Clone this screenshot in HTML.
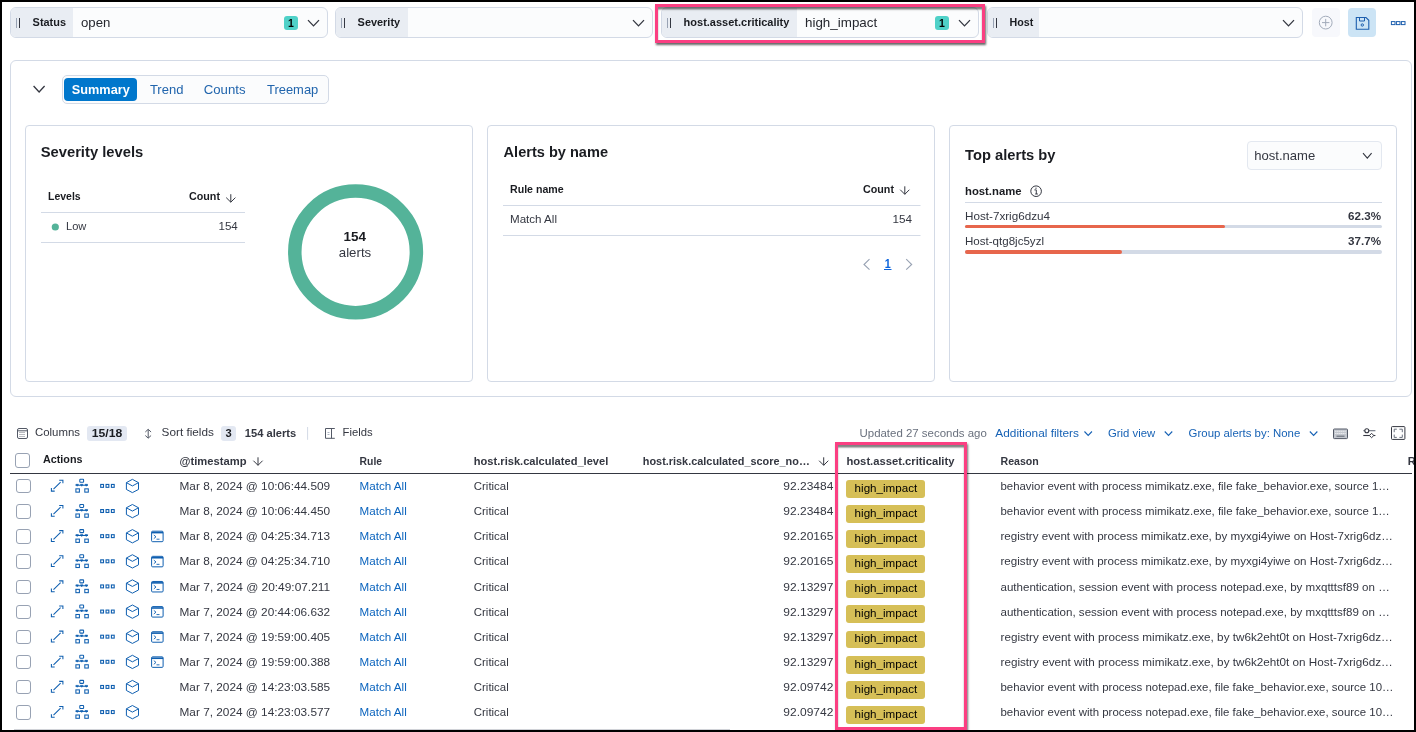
<!DOCTYPE html>
<html><head><meta charset="utf-8"><title>Alerts</title>
<style>
html,body{margin:0;padding:0;background:#fff;}
body{width:1416px;height:732px;position:relative;overflow:hidden;font-family:"Liberation Sans", sans-serif;}
svg{position:absolute;left:0;top:0;will-change:transform;}
svg text{font-family:"Liberation Sans", sans-serif;}
</style></head><body>

<div style="position:absolute;left:10px;top:7px;width:318px;height:31px;box-sizing:border-box;border:1px solid #d3dae6;border-radius:6px;background:#fbfcfd;overflow:hidden"></div>
<div style="position:absolute;left:11px;top:8px;width:62px;height:29px;background:#e9edf3;border-radius:5px 0 0 5px"></div>
<div style="position:absolute;left:284px;top:16px;width:14px;height:14px;background:#4fd1c8;border-radius:3px"></div>
<div style="position:absolute;left:335px;top:7px;width:318px;height:31px;box-sizing:border-box;border:1px solid #d3dae6;border-radius:6px;background:#fbfcfd;overflow:hidden"></div>
<div style="position:absolute;left:336px;top:8px;width:72px;height:29px;background:#e9edf3;border-radius:5px 0 0 5px"></div>
<div style="position:absolute;left:661px;top:7px;width:318px;height:31px;box-sizing:border-box;border:1px solid #d3dae6;border-radius:6px;background:#fbfcfd;overflow:hidden"></div>
<div style="position:absolute;left:662px;top:8px;width:135px;height:29px;background:#e9edf3;border-radius:5px 0 0 5px"></div>
<div style="position:absolute;left:935px;top:16px;width:14px;height:14px;background:#4fd1c8;border-radius:3px"></div>
<div style="position:absolute;left:987px;top:7px;width:316px;height:31px;box-sizing:border-box;border:1px solid #d3dae6;border-radius:6px;background:#fbfcfd;overflow:hidden"></div>
<div style="position:absolute;left:988px;top:8px;width:51px;height:29px;background:#e9edf3;border-radius:5px 0 0 5px"></div>
<div style="position:absolute;left:1312px;top:8px;width:28px;height:29px;background:#f7f8fc;border-radius:4px"></div>
<div style="position:absolute;left:1348px;top:8px;width:28px;height:29px;background:#cce4f5;border-radius:4px"></div>
<div style="position:absolute;left:10px;top:60px;width:1402px;height:337px;box-sizing:border-box;border:1px solid #d3dae6;border-radius:6px;background:#fff"></div>
<div style="position:absolute;left:61.5px;top:75.3px;width:267.5px;height:28.3px;box-sizing:border-box;border:1px solid #d3dae6;border-radius:5px;background:#fbfcfd"></div>
<div style="position:absolute;left:64px;top:78px;width:73px;height:23px;background:#0077cc;border-radius:4px"></div>
<div style="position:absolute;left:25px;top:125px;width:448px;height:257px;box-sizing:border-box;border:1px solid #d3dae6;border-radius:4px;background:#fff"></div>
<div style="position:absolute;left:487px;top:125px;width:448px;height:257px;box-sizing:border-box;border:1px solid #d3dae6;border-radius:4px;background:#fff"></div>
<div style="position:absolute;left:949px;top:125px;width:448px;height:257px;box-sizing:border-box;border:1px solid #d3dae6;border-radius:4px;background:#fff"></div>
<div style="position:absolute;left:1247.3px;top:141.1px;width:134.4px;height:28.7px;box-sizing:border-box;border:1px solid #e3e8f0;border-radius:4px;background:#fbfcfd"></div>
<div style="position:absolute;left:965px;top:225px;width:417px;height:3px;background:#d3dae6;border-radius:2px"></div>
<div style="position:absolute;left:965px;top:225px;width:260px;height:3px;background:#e7664c;border-radius:2px"></div>
<div style="position:absolute;left:965px;top:250.2px;width:417px;height:3.4px;background:#d3dae6;border-radius:2px"></div>
<div style="position:absolute;left:965px;top:250.2px;width:157px;height:3.4px;background:#e7664c;border-radius:2px"></div>
<div style="position:absolute;left:87px;top:426.4px;width:40px;height:14.2px;background:#e3e8f2;border-radius:3px"></div>
<div style="position:absolute;left:221.3px;top:426px;width:14.7px;height:14.7px;background:#e3e8f2;border-radius:3px"></div>
<div style="position:absolute;left:15.2px;top:453.3px;width:14.6px;height:14.4px;box-sizing:border-box;border:1px solid #98a2b3;border-radius:3px;background:#fff"></div>
<div style="position:absolute;left:16px;top:479.0px;width:14.6px;height:14.4px;box-sizing:border-box;border:1px solid #98a2b3;border-radius:3px;background:#fff"></div>
<div style="position:absolute;left:845.8px;top:479.8px;width:79px;height:17.8px;background:#d6bf57;border-radius:3px"></div>
<div style="position:absolute;left:16px;top:504.13px;width:14.6px;height:14.4px;box-sizing:border-box;border:1px solid #98a2b3;border-radius:3px;background:#fff"></div>
<div style="position:absolute;left:845.8px;top:504.93px;width:79px;height:17.8px;background:#d6bf57;border-radius:3px"></div>
<div style="position:absolute;left:16px;top:529.26px;width:14.6px;height:14.4px;box-sizing:border-box;border:1px solid #98a2b3;border-radius:3px;background:#fff"></div>
<div style="position:absolute;left:845.8px;top:530.0600000000001px;width:79px;height:17.8px;background:#d6bf57;border-radius:3px"></div>
<div style="position:absolute;left:16px;top:554.39px;width:14.6px;height:14.4px;box-sizing:border-box;border:1px solid #98a2b3;border-radius:3px;background:#fff"></div>
<div style="position:absolute;left:845.8px;top:555.19px;width:79px;height:17.8px;background:#d6bf57;border-radius:3px"></div>
<div style="position:absolute;left:16px;top:579.52px;width:14.6px;height:14.4px;box-sizing:border-box;border:1px solid #98a2b3;border-radius:3px;background:#fff"></div>
<div style="position:absolute;left:845.8px;top:580.32px;width:79px;height:17.8px;background:#d6bf57;border-radius:3px"></div>
<div style="position:absolute;left:16px;top:604.65px;width:14.6px;height:14.4px;box-sizing:border-box;border:1px solid #98a2b3;border-radius:3px;background:#fff"></div>
<div style="position:absolute;left:845.8px;top:605.45px;width:79px;height:17.8px;background:#d6bf57;border-radius:3px"></div>
<div style="position:absolute;left:16px;top:629.78px;width:14.6px;height:14.4px;box-sizing:border-box;border:1px solid #98a2b3;border-radius:3px;background:#fff"></div>
<div style="position:absolute;left:845.8px;top:630.58px;width:79px;height:17.8px;background:#d6bf57;border-radius:3px"></div>
<div style="position:absolute;left:16px;top:654.91px;width:14.6px;height:14.4px;box-sizing:border-box;border:1px solid #98a2b3;border-radius:3px;background:#fff"></div>
<div style="position:absolute;left:845.8px;top:655.71px;width:79px;height:17.8px;background:#d6bf57;border-radius:3px"></div>
<div style="position:absolute;left:16px;top:680.04px;width:14.6px;height:14.4px;box-sizing:border-box;border:1px solid #98a2b3;border-radius:3px;background:#fff"></div>
<div style="position:absolute;left:845.8px;top:680.84px;width:79px;height:17.8px;background:#d6bf57;border-radius:3px"></div>
<div style="position:absolute;left:16px;top:705.17px;width:14.6px;height:14.4px;box-sizing:border-box;border:1px solid #98a2b3;border-radius:3px;background:#fff"></div>
<div style="position:absolute;left:845.8px;top:705.97px;width:79px;height:17.8px;background:#d6bf57;border-radius:3px"></div>
<svg width="1416" height="732" viewBox="0 0 1416 732" fill="#343741">
<line x1="16.5" y1="18" x2="16.5" y2="28" stroke="#98a2b3" stroke-width="1"/><line x1="19.5" y1="18" x2="19.5" y2="28" stroke="#343741" stroke-width="1"/>
<polyline points="308.0,20.1 313.5,25.9 319.0,20.1" fill="none" stroke="#343741" stroke-width="1.3"/>
<line x1="341.5" y1="18" x2="341.5" y2="28" stroke="#98a2b3" stroke-width="1"/><line x1="344.5" y1="18" x2="344.5" y2="28" stroke="#343741" stroke-width="1"/>
<polyline points="633.0,20.1 638.5,25.9 644.0,20.1" fill="none" stroke="#343741" stroke-width="1.3"/>
<line x1="667.5" y1="18" x2="667.5" y2="28" stroke="#98a2b3" stroke-width="1"/><line x1="670.5" y1="18" x2="670.5" y2="28" stroke="#343741" stroke-width="1"/>
<polyline points="959.0,20.1 964.5,25.9 970.0,20.1" fill="none" stroke="#343741" stroke-width="1.3"/>
<line x1="993.5" y1="18" x2="993.5" y2="28" stroke="#98a2b3" stroke-width="1"/><line x1="996.5" y1="18" x2="996.5" y2="28" stroke="#343741" stroke-width="1"/>
<polyline points="1283.0,20.1 1288.5,25.9 1294.0,20.1" fill="none" stroke="#343741" stroke-width="1.3"/>
<circle cx="1325.7" cy="22.6" r="6.4" fill="none" stroke="#a2abba" stroke-width="1"/><line x1="1322" y1="22.6" x2="1329.4" y2="22.6" stroke="#a2abba" stroke-width="1"/><line x1="1325.7" y1="18.9" x2="1325.7" y2="26.3" stroke="#a2abba" stroke-width="1"/>
<path d="M1356.3 17.5 H1366 L1368.8 20.3 V29.2 H1356.3 Z" fill="none" stroke="#1d5fae" stroke-width="1.1"/><path d="M1359.5 17.5 V21 H1364.5 V17.5" fill="none" stroke="#1d5fae" stroke-width="1"/><circle cx="1362.3" cy="25" r="1.2" fill="none" stroke="#1d5fae" stroke-width="1"/>
<rect x="1391.4" y="21.6" width="3.6" height="3" fill="none" stroke="#1d5fae" stroke-width="1"/>
<rect x="1396.4" y="21.6" width="3.6" height="3" fill="none" stroke="#1d5fae" stroke-width="1"/>
<rect x="1401.4" y="21.6" width="3.6" height="3" fill="none" stroke="#1d5fae" stroke-width="1"/>
<polyline points="33.6,86.0 39.1,92.0 44.6,86.0" fill="none" stroke="#343741" stroke-width="1.3"/>
<path d="M230.8 194.2 V202.2 M226.20000000000002 197.6 L230.8 202.2 L235.4 197.6" fill="none" stroke="#343741" stroke-width="1"/>
<line x1="41" y1="212.5" x2="245" y2="212.5" stroke="#d3dae6" stroke-width="1"/>
<line x1="41" y1="242.5" x2="245" y2="242.5" stroke="#d3dae6" stroke-width="1"/>
<circle cx="55.3" cy="227" r="3.6" fill="#54b399"/>
<circle cx="355.6" cy="251.9" r="60.8" fill="none" stroke="#54b399" stroke-width="13.5"/>
<path d="M904.8 186.3 V194.3 M900.1999999999999 189.70000000000002 L904.8 194.3 L909.4 189.70000000000002" fill="none" stroke="#343741" stroke-width="1"/>
<line x1="503" y1="205.5" x2="920.5" y2="205.5" stroke="#d3dae6" stroke-width="1"/>
<line x1="503" y1="235.5" x2="920.5" y2="235.5" stroke="#d3dae6" stroke-width="1"/>
<polyline points="869.5,259.2 864,264.5 869.5,269.7" fill="none" stroke="#98a2b3" stroke-width="1.1"/>
<polyline points="906.2,259.2 911.7,264.5 906.2,269.7" fill="none" stroke="#98a2b3" stroke-width="1.1"/>
<line x1="884" y1="269.5" x2="891.5" y2="269.5" stroke="#0b64dd" stroke-width="1"/>
<polyline points="1363.0,153.1 1367.3,158.1 1371.6,153.1" fill="none" stroke="#343741" stroke-width="1.1"/>
<circle cx="1036.1" cy="191.2" r="5.3" fill="none" stroke="#343741" stroke-width="1"/><path d="M1034.4 189.9 H1036.3 V194 M1035.2 194 H1037.9" fill="none" stroke="#343741" stroke-width="0.95"/><circle cx="1036" cy="188.2" r="0.65" fill="#343741"/>
<line x1="965" y1="202.5" x2="1382" y2="202.5" stroke="#d3dae6" stroke-width="1"/>
<rect x="17.5" y="428.5" width="10" height="10" rx="1.5" fill="none" stroke="#535966" stroke-width="1"/><line x1="17.5" y1="430.8" x2="27.5" y2="430.8" stroke="#535966" stroke-width="1"/><line x1="19.5" y1="432.5" x2="25.5" y2="432.5" stroke="#535966" stroke-width="0.8" stroke-dasharray="1 1"/><line x1="19.5" y1="434.5" x2="25.5" y2="434.5" stroke="#535966" stroke-width="0.8" stroke-dasharray="1 1"/><line x1="19.5" y1="436.5" x2="25.5" y2="436.5" stroke="#535966" stroke-width="0.8" stroke-dasharray="1 1"/>
<path d="M148.2 429.5 V438 M145.3 432 L148.2 429.3 L151.1 432 M145.3 435.5 L148.2 438.2 L151.1 435.5" fill="none" stroke="#535966" stroke-width="1"/>
<line x1="307.6" y1="427" x2="307.6" y2="439.8" stroke="#d3dae6" stroke-width="1"/>
<path d="M325.5 428.5 V438.3 H334.8 M325.5 428.5 H334.8 M331.5 428.5 V438.3" fill="none" stroke="#535966" stroke-width="1"/><line x1="327.5" y1="432.5" x2="329.5" y2="432.5" stroke="#98a2b3" stroke-width="0.8"/><line x1="327.5" y1="434.5" x2="329.5" y2="434.5" stroke="#98a2b3" stroke-width="0.8"/>
<polyline points="1084.45,431.5 1088.2,435.5 1091.95,431.5" fill="none" stroke="#1762b5" stroke-width="1.1"/>
<polyline points="1164.75,431.5 1168.5,435.5 1172.25,431.5" fill="none" stroke="#1762b5" stroke-width="1.1"/>
<polyline points="1309.85,431.5 1313.6,435.5 1317.35,431.5" fill="none" stroke="#1762b5" stroke-width="1.1"/>
<rect x="1333.5" y="429" width="14" height="9.6" rx="0.8" fill="#c3c7ce" stroke="#535966" stroke-width="1"/><line x1="1335.3" y1="431.3" x2="1345.8" y2="431.3" stroke="#fff" stroke-width="0.9" stroke-dasharray="1.1 0.9"/><line x1="1335.3" y1="433.5" x2="1345.8" y2="433.5" stroke="#fff" stroke-width="0.9" stroke-dasharray="1.1 0.9"/><line x1="1336.5" y1="436.2" x2="1344.5" y2="436.2" stroke="#535966" stroke-width="0.9"/>
<line x1="1363.3" y1="430.7" x2="1375.4" y2="430.7" stroke="#69707d" stroke-width="1.1"/><circle cx="1366.8" cy="430.7" r="2" fill="#fff" stroke="#343741" stroke-width="1.1"/><line x1="1363.3" y1="435.5" x2="1375.4" y2="435.5" stroke="#343741" stroke-width="1.1"/><path d="M1369.4 435.5 L1371.6 433.3 L1373.8 435.5 L1371.6 437.7 Z" fill="#fff" stroke="#343741" stroke-width="1"/>
<rect x="1391.5" y="426.6" width="13.4" height="12.8" rx="0.8" fill="none" stroke="#343741" stroke-width="1"/><path d="M1394.2 432.2 V429.2 H1396.8 M1399.4 429.2 H1402.3 V432.2 M1402.3 434.6 V437.4 H1399.4 M1396.8 437.4 H1394.2 V434.6" fill="none" stroke="#69707d" stroke-width="1"/>
<path d="M258 457.3 V465.3 M253.4 460.7 L258 465.3 L262.6 460.7" fill="none" stroke="#343741" stroke-width="1"/>
<path d="M823.7 457.3 V465.3 M819.1 460.7 L823.7 465.3 L828.3000000000001 460.7" fill="none" stroke="#343741" stroke-width="1"/>
<line x1="10" y1="473.5" x2="1412" y2="473.5" stroke="#343741" stroke-width="1.1"/>
<path d="M53.5 489.0400000000001 L60.6 482.0400000000001 M59.2 480.34000000000003 H62.9 V483.34000000000003 M51.4 488.0400000000001 V491.14000000000004 H54.7" fill="none" stroke="#0f5fb0" stroke-width="1.05"/>
<rect x="79.8" y="479.34000000000003" width="3.8" height="3" rx="0.6" fill="none" stroke="#0f5fb0" stroke-width="1.05"/><path d="M75.5 485.24000000000007 H88" fill="none" stroke="#0f5fb0" stroke-width="1"/><path d="M75.9 484.34000000000003 L77.2 486.24000000000007 L78.5 484.34000000000003 Z" fill="#0f5fb0" stroke="#0f5fb0" stroke-width="0.6"/><path d="M80.4 484.34000000000003 L81.7 486.24000000000007 L83.0 484.34000000000003 Z" fill="#0f5fb0" stroke="#0f5fb0" stroke-width="0.6"/><path d="M85.0 484.34000000000003 L86.3 486.24000000000007 L87.6 484.34000000000003 Z" fill="#0f5fb0" stroke="#0f5fb0" stroke-width="0.6"/><rect x="75.9" y="488.84000000000003" width="3.5" height="3.3" fill="none" stroke="#0f5fb0" stroke-width="1.05"/><rect x="84.8" y="488.84000000000003" width="3.5" height="3.3" fill="none" stroke="#0f5fb0" stroke-width="1.05"/>
<rect x="100.7" y="484.44000000000005" width="2.8" height="2.9" fill="none" stroke="#0f5fb0" stroke-width="1.1"/>
<rect x="106.05" y="484.44000000000005" width="2.8" height="2.9" fill="none" stroke="#0f5fb0" stroke-width="1.1"/>
<rect x="111.4" y="484.44000000000005" width="2.8" height="2.9" fill="none" stroke="#0f5fb0" stroke-width="1.1"/>
<path d="M132.4 479.34000000000003 L138.5 482.64000000000004 V489.44000000000005 L132.4 492.64000000000004 L126.4 489.44000000000005 V482.64000000000004 Z M126.4 482.64000000000004 L132.4 485.94000000000005 L138.5 482.64000000000004" fill="none" stroke="#0f5fb0" stroke-width="1" stroke-linejoin="round"/>
<path d="M53.5 514.1700000000001 L60.6 507.1700000000001 M59.2 505.47 H62.9 V508.47 M51.4 513.1700000000001 V516.2700000000001 H54.7" fill="none" stroke="#0f5fb0" stroke-width="1.05"/>
<rect x="79.8" y="504.47" width="3.8" height="3" rx="0.6" fill="none" stroke="#0f5fb0" stroke-width="1.05"/><path d="M75.5 510.37000000000006 H88" fill="none" stroke="#0f5fb0" stroke-width="1"/><path d="M75.9 509.47 L77.2 511.37000000000006 L78.5 509.47 Z" fill="#0f5fb0" stroke="#0f5fb0" stroke-width="0.6"/><path d="M80.4 509.47 L81.7 511.37000000000006 L83.0 509.47 Z" fill="#0f5fb0" stroke="#0f5fb0" stroke-width="0.6"/><path d="M85.0 509.47 L86.3 511.37000000000006 L87.6 509.47 Z" fill="#0f5fb0" stroke="#0f5fb0" stroke-width="0.6"/><rect x="75.9" y="513.97" width="3.5" height="3.3" fill="none" stroke="#0f5fb0" stroke-width="1.05"/><rect x="84.8" y="513.97" width="3.5" height="3.3" fill="none" stroke="#0f5fb0" stroke-width="1.05"/>
<rect x="100.7" y="509.57000000000005" width="2.8" height="2.9" fill="none" stroke="#0f5fb0" stroke-width="1.1"/>
<rect x="106.05" y="509.57000000000005" width="2.8" height="2.9" fill="none" stroke="#0f5fb0" stroke-width="1.1"/>
<rect x="111.4" y="509.57000000000005" width="2.8" height="2.9" fill="none" stroke="#0f5fb0" stroke-width="1.1"/>
<path d="M132.4 504.47 L138.5 507.77000000000004 V514.57 L132.4 517.7700000000001 L126.4 514.57 V507.77000000000004 Z M126.4 507.77000000000004 L132.4 511.07000000000005 L138.5 507.77000000000004" fill="none" stroke="#0f5fb0" stroke-width="1" stroke-linejoin="round"/>
<path d="M53.5 539.3000000000001 L60.6 532.3000000000001 M59.2 530.6 H62.9 V533.6 M51.4 538.3000000000001 V541.4000000000001 H54.7" fill="none" stroke="#0f5fb0" stroke-width="1.05"/>
<rect x="79.8" y="529.6" width="3.8" height="3" rx="0.6" fill="none" stroke="#0f5fb0" stroke-width="1.05"/><path d="M75.5 535.5 H88" fill="none" stroke="#0f5fb0" stroke-width="1"/><path d="M75.9 534.6 L77.2 536.5 L78.5 534.6 Z" fill="#0f5fb0" stroke="#0f5fb0" stroke-width="0.6"/><path d="M80.4 534.6 L81.7 536.5 L83.0 534.6 Z" fill="#0f5fb0" stroke="#0f5fb0" stroke-width="0.6"/><path d="M85.0 534.6 L86.3 536.5 L87.6 534.6 Z" fill="#0f5fb0" stroke="#0f5fb0" stroke-width="0.6"/><rect x="75.9" y="539.1" width="3.5" height="3.3" fill="none" stroke="#0f5fb0" stroke-width="1.05"/><rect x="84.8" y="539.1" width="3.5" height="3.3" fill="none" stroke="#0f5fb0" stroke-width="1.05"/>
<rect x="100.7" y="534.7" width="2.8" height="2.9" fill="none" stroke="#0f5fb0" stroke-width="1.1"/>
<rect x="106.05" y="534.7" width="2.8" height="2.9" fill="none" stroke="#0f5fb0" stroke-width="1.1"/>
<rect x="111.4" y="534.7" width="2.8" height="2.9" fill="none" stroke="#0f5fb0" stroke-width="1.1"/>
<path d="M132.4 529.6 L138.5 532.9000000000001 V539.7 L132.4 542.9000000000001 L126.4 539.7 V532.9000000000001 Z M126.4 532.9000000000001 L132.4 536.2 L138.5 532.9000000000001" fill="none" stroke="#0f5fb0" stroke-width="1" stroke-linejoin="round"/>
<rect x="151.6" y="531.2" width="11.5" height="10.5" rx="1" fill="none" stroke="#0f5fb0" stroke-width="1"/><line x1="151.6" y1="532.6" x2="163.1" y2="532.6" stroke="#0f5fb0" stroke-width="1.6"/><path d="M153.8 535.0 L156 536.8000000000001 L153.8 538.6 M156.5 539.2 H159.5" fill="none" stroke="#0f5fb0" stroke-width="0.9"/>
<path d="M53.5 564.4300000000001 L60.6 557.4300000000001 M59.2 555.73 H62.9 V558.73 M51.4 563.4300000000001 V566.5300000000001 H54.7" fill="none" stroke="#0f5fb0" stroke-width="1.05"/>
<rect x="79.8" y="554.73" width="3.8" height="3" rx="0.6" fill="none" stroke="#0f5fb0" stroke-width="1.05"/><path d="M75.5 560.63 H88" fill="none" stroke="#0f5fb0" stroke-width="1"/><path d="M75.9 559.73 L77.2 561.63 L78.5 559.73 Z" fill="#0f5fb0" stroke="#0f5fb0" stroke-width="0.6"/><path d="M80.4 559.73 L81.7 561.63 L83.0 559.73 Z" fill="#0f5fb0" stroke="#0f5fb0" stroke-width="0.6"/><path d="M85.0 559.73 L86.3 561.63 L87.6 559.73 Z" fill="#0f5fb0" stroke="#0f5fb0" stroke-width="0.6"/><rect x="75.9" y="564.23" width="3.5" height="3.3" fill="none" stroke="#0f5fb0" stroke-width="1.05"/><rect x="84.8" y="564.23" width="3.5" height="3.3" fill="none" stroke="#0f5fb0" stroke-width="1.05"/>
<rect x="100.7" y="559.83" width="2.8" height="2.9" fill="none" stroke="#0f5fb0" stroke-width="1.1"/>
<rect x="106.05" y="559.83" width="2.8" height="2.9" fill="none" stroke="#0f5fb0" stroke-width="1.1"/>
<rect x="111.4" y="559.83" width="2.8" height="2.9" fill="none" stroke="#0f5fb0" stroke-width="1.1"/>
<path d="M132.4 554.73 L138.5 558.0300000000001 V564.83 L132.4 568.0300000000001 L126.4 564.83 V558.0300000000001 Z M126.4 558.0300000000001 L132.4 561.33 L138.5 558.0300000000001" fill="none" stroke="#0f5fb0" stroke-width="1" stroke-linejoin="round"/>
<rect x="151.6" y="556.33" width="11.5" height="10.5" rx="1" fill="none" stroke="#0f5fb0" stroke-width="1"/><line x1="151.6" y1="557.73" x2="163.1" y2="557.73" stroke="#0f5fb0" stroke-width="1.6"/><path d="M153.8 560.13 L156 561.9300000000001 L153.8 563.73 M156.5 564.33 H159.5" fill="none" stroke="#0f5fb0" stroke-width="0.9"/>
<path d="M53.5 589.5600000000001 L60.6 582.5600000000001 M59.2 580.86 H62.9 V583.86 M51.4 588.5600000000001 V591.6600000000001 H54.7" fill="none" stroke="#0f5fb0" stroke-width="1.05"/>
<rect x="79.8" y="579.86" width="3.8" height="3" rx="0.6" fill="none" stroke="#0f5fb0" stroke-width="1.05"/><path d="M75.5 585.76 H88" fill="none" stroke="#0f5fb0" stroke-width="1"/><path d="M75.9 584.86 L77.2 586.76 L78.5 584.86 Z" fill="#0f5fb0" stroke="#0f5fb0" stroke-width="0.6"/><path d="M80.4 584.86 L81.7 586.76 L83.0 584.86 Z" fill="#0f5fb0" stroke="#0f5fb0" stroke-width="0.6"/><path d="M85.0 584.86 L86.3 586.76 L87.6 584.86 Z" fill="#0f5fb0" stroke="#0f5fb0" stroke-width="0.6"/><rect x="75.9" y="589.36" width="3.5" height="3.3" fill="none" stroke="#0f5fb0" stroke-width="1.05"/><rect x="84.8" y="589.36" width="3.5" height="3.3" fill="none" stroke="#0f5fb0" stroke-width="1.05"/>
<rect x="100.7" y="584.96" width="2.8" height="2.9" fill="none" stroke="#0f5fb0" stroke-width="1.1"/>
<rect x="106.05" y="584.96" width="2.8" height="2.9" fill="none" stroke="#0f5fb0" stroke-width="1.1"/>
<rect x="111.4" y="584.96" width="2.8" height="2.9" fill="none" stroke="#0f5fb0" stroke-width="1.1"/>
<path d="M132.4 579.86 L138.5 583.1600000000001 V589.96 L132.4 593.1600000000001 L126.4 589.96 V583.1600000000001 Z M126.4 583.1600000000001 L132.4 586.46 L138.5 583.1600000000001" fill="none" stroke="#0f5fb0" stroke-width="1" stroke-linejoin="round"/>
<rect x="151.6" y="581.46" width="11.5" height="10.5" rx="1" fill="none" stroke="#0f5fb0" stroke-width="1"/><line x1="151.6" y1="582.86" x2="163.1" y2="582.86" stroke="#0f5fb0" stroke-width="1.6"/><path d="M153.8 585.26 L156 587.0600000000001 L153.8 588.86 M156.5 589.46 H159.5" fill="none" stroke="#0f5fb0" stroke-width="0.9"/>
<path d="M53.5 614.69 L60.6 607.69 M59.2 605.99 H62.9 V608.99 M51.4 613.69 V616.7900000000001 H54.7" fill="none" stroke="#0f5fb0" stroke-width="1.05"/>
<rect x="79.8" y="604.99" width="3.8" height="3" rx="0.6" fill="none" stroke="#0f5fb0" stroke-width="1.05"/><path d="M75.5 610.89 H88" fill="none" stroke="#0f5fb0" stroke-width="1"/><path d="M75.9 609.99 L77.2 611.89 L78.5 609.99 Z" fill="#0f5fb0" stroke="#0f5fb0" stroke-width="0.6"/><path d="M80.4 609.99 L81.7 611.89 L83.0 609.99 Z" fill="#0f5fb0" stroke="#0f5fb0" stroke-width="0.6"/><path d="M85.0 609.99 L86.3 611.89 L87.6 609.99 Z" fill="#0f5fb0" stroke="#0f5fb0" stroke-width="0.6"/><rect x="75.9" y="614.49" width="3.5" height="3.3" fill="none" stroke="#0f5fb0" stroke-width="1.05"/><rect x="84.8" y="614.49" width="3.5" height="3.3" fill="none" stroke="#0f5fb0" stroke-width="1.05"/>
<rect x="100.7" y="610.09" width="2.8" height="2.9" fill="none" stroke="#0f5fb0" stroke-width="1.1"/>
<rect x="106.05" y="610.09" width="2.8" height="2.9" fill="none" stroke="#0f5fb0" stroke-width="1.1"/>
<rect x="111.4" y="610.09" width="2.8" height="2.9" fill="none" stroke="#0f5fb0" stroke-width="1.1"/>
<path d="M132.4 604.99 L138.5 608.2900000000001 V615.09 L132.4 618.2900000000001 L126.4 615.09 V608.2900000000001 Z M126.4 608.2900000000001 L132.4 611.59 L138.5 608.2900000000001" fill="none" stroke="#0f5fb0" stroke-width="1" stroke-linejoin="round"/>
<rect x="151.6" y="606.59" width="11.5" height="10.5" rx="1" fill="none" stroke="#0f5fb0" stroke-width="1"/><line x1="151.6" y1="607.99" x2="163.1" y2="607.99" stroke="#0f5fb0" stroke-width="1.6"/><path d="M153.8 610.39 L156 612.19 L153.8 613.99 M156.5 614.59 H159.5" fill="none" stroke="#0f5fb0" stroke-width="0.9"/>
<path d="M53.5 639.82 L60.6 632.82 M59.2 631.12 H62.9 V634.12 M51.4 638.82 V641.9200000000001 H54.7" fill="none" stroke="#0f5fb0" stroke-width="1.05"/>
<rect x="79.8" y="630.12" width="3.8" height="3" rx="0.6" fill="none" stroke="#0f5fb0" stroke-width="1.05"/><path d="M75.5 636.02 H88" fill="none" stroke="#0f5fb0" stroke-width="1"/><path d="M75.9 635.12 L77.2 637.02 L78.5 635.12 Z" fill="#0f5fb0" stroke="#0f5fb0" stroke-width="0.6"/><path d="M80.4 635.12 L81.7 637.02 L83.0 635.12 Z" fill="#0f5fb0" stroke="#0f5fb0" stroke-width="0.6"/><path d="M85.0 635.12 L86.3 637.02 L87.6 635.12 Z" fill="#0f5fb0" stroke="#0f5fb0" stroke-width="0.6"/><rect x="75.9" y="639.62" width="3.5" height="3.3" fill="none" stroke="#0f5fb0" stroke-width="1.05"/><rect x="84.8" y="639.62" width="3.5" height="3.3" fill="none" stroke="#0f5fb0" stroke-width="1.05"/>
<rect x="100.7" y="635.22" width="2.8" height="2.9" fill="none" stroke="#0f5fb0" stroke-width="1.1"/>
<rect x="106.05" y="635.22" width="2.8" height="2.9" fill="none" stroke="#0f5fb0" stroke-width="1.1"/>
<rect x="111.4" y="635.22" width="2.8" height="2.9" fill="none" stroke="#0f5fb0" stroke-width="1.1"/>
<path d="M132.4 630.12 L138.5 633.4200000000001 V640.22 L132.4 643.4200000000001 L126.4 640.22 V633.4200000000001 Z M126.4 633.4200000000001 L132.4 636.72 L138.5 633.4200000000001" fill="none" stroke="#0f5fb0" stroke-width="1" stroke-linejoin="round"/>
<rect x="151.6" y="631.72" width="11.5" height="10.5" rx="1" fill="none" stroke="#0f5fb0" stroke-width="1"/><line x1="151.6" y1="633.12" x2="163.1" y2="633.12" stroke="#0f5fb0" stroke-width="1.6"/><path d="M153.8 635.52 L156 637.32 L153.8 639.12 M156.5 639.72 H159.5" fill="none" stroke="#0f5fb0" stroke-width="0.9"/>
<path d="M53.5 664.95 L60.6 657.95 M59.2 656.25 H62.9 V659.25 M51.4 663.95 V667.0500000000001 H54.7" fill="none" stroke="#0f5fb0" stroke-width="1.05"/>
<rect x="79.8" y="655.25" width="3.8" height="3" rx="0.6" fill="none" stroke="#0f5fb0" stroke-width="1.05"/><path d="M75.5 661.15 H88" fill="none" stroke="#0f5fb0" stroke-width="1"/><path d="M75.9 660.25 L77.2 662.15 L78.5 660.25 Z" fill="#0f5fb0" stroke="#0f5fb0" stroke-width="0.6"/><path d="M80.4 660.25 L81.7 662.15 L83.0 660.25 Z" fill="#0f5fb0" stroke="#0f5fb0" stroke-width="0.6"/><path d="M85.0 660.25 L86.3 662.15 L87.6 660.25 Z" fill="#0f5fb0" stroke="#0f5fb0" stroke-width="0.6"/><rect x="75.9" y="664.75" width="3.5" height="3.3" fill="none" stroke="#0f5fb0" stroke-width="1.05"/><rect x="84.8" y="664.75" width="3.5" height="3.3" fill="none" stroke="#0f5fb0" stroke-width="1.05"/>
<rect x="100.7" y="660.35" width="2.8" height="2.9" fill="none" stroke="#0f5fb0" stroke-width="1.1"/>
<rect x="106.05" y="660.35" width="2.8" height="2.9" fill="none" stroke="#0f5fb0" stroke-width="1.1"/>
<rect x="111.4" y="660.35" width="2.8" height="2.9" fill="none" stroke="#0f5fb0" stroke-width="1.1"/>
<path d="M132.4 655.25 L138.5 658.5500000000001 V665.35 L132.4 668.5500000000001 L126.4 665.35 V658.5500000000001 Z M126.4 658.5500000000001 L132.4 661.85 L138.5 658.5500000000001" fill="none" stroke="#0f5fb0" stroke-width="1" stroke-linejoin="round"/>
<rect x="151.6" y="656.85" width="11.5" height="10.5" rx="1" fill="none" stroke="#0f5fb0" stroke-width="1"/><line x1="151.6" y1="658.25" x2="163.1" y2="658.25" stroke="#0f5fb0" stroke-width="1.6"/><path d="M153.8 660.65 L156 662.45 L153.8 664.25 M156.5 664.85 H159.5" fill="none" stroke="#0f5fb0" stroke-width="0.9"/>
<path d="M53.5 690.08 L60.6 683.08 M59.2 681.38 H62.9 V684.38 M51.4 689.08 V692.1800000000001 H54.7" fill="none" stroke="#0f5fb0" stroke-width="1.05"/>
<rect x="79.8" y="680.38" width="3.8" height="3" rx="0.6" fill="none" stroke="#0f5fb0" stroke-width="1.05"/><path d="M75.5 686.28 H88" fill="none" stroke="#0f5fb0" stroke-width="1"/><path d="M75.9 685.38 L77.2 687.28 L78.5 685.38 Z" fill="#0f5fb0" stroke="#0f5fb0" stroke-width="0.6"/><path d="M80.4 685.38 L81.7 687.28 L83.0 685.38 Z" fill="#0f5fb0" stroke="#0f5fb0" stroke-width="0.6"/><path d="M85.0 685.38 L86.3 687.28 L87.6 685.38 Z" fill="#0f5fb0" stroke="#0f5fb0" stroke-width="0.6"/><rect x="75.9" y="689.88" width="3.5" height="3.3" fill="none" stroke="#0f5fb0" stroke-width="1.05"/><rect x="84.8" y="689.88" width="3.5" height="3.3" fill="none" stroke="#0f5fb0" stroke-width="1.05"/>
<rect x="100.7" y="685.48" width="2.8" height="2.9" fill="none" stroke="#0f5fb0" stroke-width="1.1"/>
<rect x="106.05" y="685.48" width="2.8" height="2.9" fill="none" stroke="#0f5fb0" stroke-width="1.1"/>
<rect x="111.4" y="685.48" width="2.8" height="2.9" fill="none" stroke="#0f5fb0" stroke-width="1.1"/>
<path d="M132.4 680.38 L138.5 683.6800000000001 V690.48 L132.4 693.6800000000001 L126.4 690.48 V683.6800000000001 Z M126.4 683.6800000000001 L132.4 686.98 L138.5 683.6800000000001" fill="none" stroke="#0f5fb0" stroke-width="1" stroke-linejoin="round"/>
<path d="M53.5 715.21 L60.6 708.21 M59.2 706.51 H62.9 V709.51 M51.4 714.21 V717.3100000000001 H54.7" fill="none" stroke="#0f5fb0" stroke-width="1.05"/>
<rect x="79.8" y="705.51" width="3.8" height="3" rx="0.6" fill="none" stroke="#0f5fb0" stroke-width="1.05"/><path d="M75.5 711.41 H88" fill="none" stroke="#0f5fb0" stroke-width="1"/><path d="M75.9 710.51 L77.2 712.41 L78.5 710.51 Z" fill="#0f5fb0" stroke="#0f5fb0" stroke-width="0.6"/><path d="M80.4 710.51 L81.7 712.41 L83.0 710.51 Z" fill="#0f5fb0" stroke="#0f5fb0" stroke-width="0.6"/><path d="M85.0 710.51 L86.3 712.41 L87.6 710.51 Z" fill="#0f5fb0" stroke="#0f5fb0" stroke-width="0.6"/><rect x="75.9" y="715.01" width="3.5" height="3.3" fill="none" stroke="#0f5fb0" stroke-width="1.05"/><rect x="84.8" y="715.01" width="3.5" height="3.3" fill="none" stroke="#0f5fb0" stroke-width="1.05"/>
<rect x="100.7" y="710.61" width="2.8" height="2.9" fill="none" stroke="#0f5fb0" stroke-width="1.1"/>
<rect x="106.05" y="710.61" width="2.8" height="2.9" fill="none" stroke="#0f5fb0" stroke-width="1.1"/>
<rect x="111.4" y="710.61" width="2.8" height="2.9" fill="none" stroke="#0f5fb0" stroke-width="1.1"/>
<path d="M132.4 705.51 L138.5 708.8100000000001 V715.61 L132.4 718.8100000000001 L126.4 715.61 V708.8100000000001 Z M126.4 708.8100000000001 L132.4 712.11 L138.5 708.8100000000001" fill="none" stroke="#0f5fb0" stroke-width="1" stroke-linejoin="round"/>
<text x="32.6" y="25.8" font-size="10.6" font-weight="700" fill="#1a1c21" textLength="33.4" lengthAdjust="spacingAndGlyphs">Status</text>
<text x="81" y="26.8" font-size="13.6" fill="#25272e" textLength="29.4" lengthAdjust="spacingAndGlyphs">open</text>
<text x="291" y="27" font-size="10.5" font-weight="700" fill="#000" text-anchor="middle">1</text>
<text x="357.6" y="25.8" font-size="10.6" font-weight="700" fill="#1a1c21" textLength="42.5" lengthAdjust="spacingAndGlyphs">Severity</text>
<text x="683.6" y="25.8" font-size="10.6" font-weight="700" fill="#1a1c21" textLength="105.8" lengthAdjust="spacingAndGlyphs">host.asset.criticality</text>
<text x="805" y="26.8" font-size="13.6" fill="#25272e" textLength="72.2" lengthAdjust="spacingAndGlyphs">high_impact</text>
<text x="942" y="27" font-size="10.5" font-weight="700" fill="#000" text-anchor="middle">1</text>
<text x="1009.6" y="25.8" font-size="10.6" font-weight="700" fill="#1a1c21" textLength="23.8" lengthAdjust="spacingAndGlyphs">Host</text>
<text x="71.8" y="94.1" font-size="13" font-weight="700" fill="#fff" textLength="58" lengthAdjust="spacingAndGlyphs">Summary</text>
<text x="149.9" y="94.1" font-size="13" fill="#2165ad" textLength="33.5" lengthAdjust="spacingAndGlyphs">Trend</text>
<text x="203.7" y="94.1" font-size="13" fill="#2165ad" textLength="41.8" lengthAdjust="spacingAndGlyphs">Counts</text>
<text x="267" y="94.1" font-size="13" fill="#2165ad" textLength="51.3" lengthAdjust="spacingAndGlyphs">Treemap</text>
<text x="40.7" y="156.8" font-size="15" font-weight="700" fill="#1a1c21" textLength="102.5" lengthAdjust="spacingAndGlyphs">Severity levels</text>
<text x="48" y="199.8" font-size="10.8" font-weight="700" fill="#1a1c21" textLength="32.7" lengthAdjust="spacingAndGlyphs">Levels</text>
<text x="189" y="199.8" font-size="10.8" font-weight="700" fill="#1a1c21" textLength="31" lengthAdjust="spacingAndGlyphs">Count</text>
<text x="66" y="230.3" font-size="11.2" textLength="20.4" lengthAdjust="spacingAndGlyphs">Low</text>
<text x="237.8" y="230.3" font-size="11.2" text-anchor="end" textLength="19.3" lengthAdjust="spacingAndGlyphs">154</text>
<text x="354.8" y="241" font-size="12.8" font-weight="700" fill="#1a1c21" text-anchor="middle" textLength="22.5" lengthAdjust="spacingAndGlyphs">154</text>
<text x="355" y="257" font-size="12.8" text-anchor="middle" textLength="32.4" lengthAdjust="spacingAndGlyphs">alerts</text>
<text x="503.6" y="157.2" font-size="15" font-weight="700" fill="#1a1c21" textLength="104.4" lengthAdjust="spacingAndGlyphs">Alerts by name</text>
<text x="510" y="192.8" font-size="10.8" font-weight="700" fill="#1a1c21" textLength="53.7" lengthAdjust="spacingAndGlyphs">Rule name</text>
<text x="863" y="192.8" font-size="10.8" font-weight="700" fill="#1a1c21" textLength="31" lengthAdjust="spacingAndGlyphs">Count</text>
<text x="510" y="223.4" font-size="11.5" textLength="47" lengthAdjust="spacingAndGlyphs">Match All</text>
<text x="912" y="223.4" font-size="11.5" text-anchor="end" textLength="19.5" lengthAdjust="spacingAndGlyphs">154</text>
<text x="884.8" y="268" font-size="12" font-weight="700" fill="#0b64dd" textLength="6" lengthAdjust="spacingAndGlyphs">1</text>
<text x="965" y="160.2" font-size="15.5" font-weight="700" fill="#1a1c21" textLength="90.5" lengthAdjust="spacingAndGlyphs">Top alerts by</text>
<text x="1254.2" y="160.2" font-size="13" textLength="61" lengthAdjust="spacingAndGlyphs">host.name</text>
<text x="965" y="195" font-size="11" font-weight="700" fill="#1a1c21" textLength="56.5" lengthAdjust="spacingAndGlyphs">host.name</text>
<text x="965" y="219.9" font-size="11" textLength="85" lengthAdjust="spacingAndGlyphs">Host-7xrig6dzu4</text>
<text x="1381" y="219.9" font-size="11" font-weight="700" text-anchor="end" textLength="33" lengthAdjust="spacingAndGlyphs">62.3%</text>
<text x="965" y="245.1" font-size="11" textLength="79" lengthAdjust="spacingAndGlyphs">Host-qtg8jc5yzl</text>
<text x="1381" y="245.1" font-size="11" font-weight="700" text-anchor="end" textLength="33" lengthAdjust="spacingAndGlyphs">37.7%</text>
<text x="35" y="436.1" font-size="11" textLength="45" lengthAdjust="spacingAndGlyphs">Columns</text>
<text x="107" y="437.3" font-size="11" font-weight="700" fill="#1a1c21" text-anchor="middle" textLength="30.5" lengthAdjust="spacingAndGlyphs">15/18</text>
<text x="161.6" y="436.1" font-size="11" textLength="52.3" lengthAdjust="spacingAndGlyphs">Sort fields</text>
<text x="228.6" y="437.3" font-size="11" font-weight="700" fill="#1a1c21" text-anchor="middle" textLength="6.2" lengthAdjust="spacingAndGlyphs">3</text>
<text x="244.8" y="437.4" font-size="11.3" font-weight="700" textLength="51.4" lengthAdjust="spacingAndGlyphs">154 alerts</text>
<text x="342.6" y="436.1" font-size="11" textLength="30.1" lengthAdjust="spacingAndGlyphs">Fields</text>
<text x="859.5" y="437.1" font-size="11.3" fill="#69707d" textLength="127.3" lengthAdjust="spacingAndGlyphs">Updated 27 seconds ago</text>
<text x="995.3" y="437.1" font-size="11.3" fill="#1762b5" textLength="83.7" lengthAdjust="spacingAndGlyphs">Additional filters</text>
<text x="1108" y="437.1" font-size="11.3" fill="#1762b5" textLength="47.2" lengthAdjust="spacingAndGlyphs">Grid view</text>
<text x="1188.6" y="437.1" font-size="11.3" fill="#1762b5" textLength="111.7" lengthAdjust="spacingAndGlyphs">Group alerts by: None</text>
<text x="43" y="463.3" font-size="11" font-weight="700" fill="#1a1c21" textLength="39.5" lengthAdjust="spacingAndGlyphs">Actions</text>
<text x="179.5" y="464.5" font-size="11" font-weight="700" textLength="67" lengthAdjust="spacingAndGlyphs">@timestamp</text>
<text x="359.6" y="464.5" font-size="11" font-weight="700" textLength="22.5" lengthAdjust="spacingAndGlyphs">Rule</text>
<text x="473.8" y="464.5" font-size="11" font-weight="700" textLength="134.5" lengthAdjust="spacingAndGlyphs">host.risk.calculated_level</text>
<text x="642.8" y="464.5" font-size="11" font-weight="700" textLength="167" lengthAdjust="spacingAndGlyphs">host.risk.calculated_score_no…</text>
<text x="846.4" y="464.5" font-size="11" font-weight="700" textLength="108.1" lengthAdjust="spacingAndGlyphs">host.asset.criticality</text>
<text x="1000.5" y="464.5" font-size="11" font-weight="700" textLength="38.3" lengthAdjust="spacingAndGlyphs">Reason</text>
<text x="1407.7" y="464.5" font-size="11" font-weight="700">R</text>
<text x="179.5" y="490.1" font-size="11.6" textLength="150.6" lengthAdjust="spacingAndGlyphs">Mar 8, 2024 @ 10:06:44.509</text>
<text x="359.6" y="490.1" font-size="11.6" fill="#0a63bd" textLength="47.2" lengthAdjust="spacingAndGlyphs">Match All</text>
<text x="473.8" y="490.1" font-size="11.6" textLength="34.9" lengthAdjust="spacingAndGlyphs">Critical</text>
<text x="833.3" y="490.1" font-size="11.6" text-anchor="end" textLength="50" lengthAdjust="spacingAndGlyphs">92.23484</text>
<text x="854.6" y="491.70000000000005" font-size="11.6" fill="#000" textLength="62.6" lengthAdjust="spacingAndGlyphs">high_impact</text>
<text x="1000.5" y="490.1" font-size="11.4" textLength="389.2" lengthAdjust="spacingAndGlyphs">behavior event with process mimikatz.exe, file fake_behavior.exe, source 1…</text>
<text x="179.5" y="515.23" font-size="11.6" textLength="150.6" lengthAdjust="spacingAndGlyphs">Mar 8, 2024 @ 10:06:44.450</text>
<text x="359.6" y="515.23" font-size="11.6" fill="#0a63bd" textLength="47.2" lengthAdjust="spacingAndGlyphs">Match All</text>
<text x="473.8" y="515.23" font-size="11.6" textLength="34.9" lengthAdjust="spacingAndGlyphs">Critical</text>
<text x="833.3" y="515.23" font-size="11.6" text-anchor="end" textLength="50" lengthAdjust="spacingAndGlyphs">92.23484</text>
<text x="854.6" y="516.83" font-size="11.6" fill="#000" textLength="62.6" lengthAdjust="spacingAndGlyphs">high_impact</text>
<text x="1000.5" y="515.23" font-size="11.4" textLength="389.2" lengthAdjust="spacingAndGlyphs">behavior event with process mimikatz.exe, file fake_behavior.exe, source 1…</text>
<text x="179.5" y="540.36" font-size="11.6" textLength="150.6" lengthAdjust="spacingAndGlyphs">Mar 8, 2024 @ 04:25:34.713</text>
<text x="359.6" y="540.36" font-size="11.6" fill="#0a63bd" textLength="47.2" lengthAdjust="spacingAndGlyphs">Match All</text>
<text x="473.8" y="540.36" font-size="11.6" textLength="34.9" lengthAdjust="spacingAndGlyphs">Critical</text>
<text x="833.3" y="540.36" font-size="11.6" text-anchor="end" textLength="50" lengthAdjust="spacingAndGlyphs">92.20165</text>
<text x="854.6" y="541.96" font-size="11.6" fill="#000" textLength="62.6" lengthAdjust="spacingAndGlyphs">high_impact</text>
<text x="1000.5" y="540.36" font-size="11.4" textLength="392.4" lengthAdjust="spacingAndGlyphs">registry event with process mimikatz.exe, by myxgi4yiwe on Host-7xrig6dz…</text>
<text x="179.5" y="565.49" font-size="11.6" textLength="150.6" lengthAdjust="spacingAndGlyphs">Mar 8, 2024 @ 04:25:34.710</text>
<text x="359.6" y="565.49" font-size="11.6" fill="#0a63bd" textLength="47.2" lengthAdjust="spacingAndGlyphs">Match All</text>
<text x="473.8" y="565.49" font-size="11.6" textLength="34.9" lengthAdjust="spacingAndGlyphs">Critical</text>
<text x="833.3" y="565.49" font-size="11.6" text-anchor="end" textLength="50" lengthAdjust="spacingAndGlyphs">92.20165</text>
<text x="854.6" y="567.09" font-size="11.6" fill="#000" textLength="62.6" lengthAdjust="spacingAndGlyphs">high_impact</text>
<text x="1000.5" y="565.49" font-size="11.4" textLength="392.4" lengthAdjust="spacingAndGlyphs">registry event with process mimikatz.exe, by myxgi4yiwe on Host-7xrig6dz…</text>
<text x="179.5" y="590.62" font-size="11.6" textLength="150.6" lengthAdjust="spacingAndGlyphs">Mar 7, 2024 @ 20:49:07.211</text>
<text x="359.6" y="590.62" font-size="11.6" fill="#0a63bd" textLength="47.2" lengthAdjust="spacingAndGlyphs">Match All</text>
<text x="473.8" y="590.62" font-size="11.6" textLength="34.9" lengthAdjust="spacingAndGlyphs">Critical</text>
<text x="833.3" y="590.62" font-size="11.6" text-anchor="end" textLength="50" lengthAdjust="spacingAndGlyphs">92.13297</text>
<text x="854.6" y="592.22" font-size="11.6" fill="#000" textLength="62.6" lengthAdjust="spacingAndGlyphs">high_impact</text>
<text x="1000.5" y="590.62" font-size="11.4" textLength="389.2" lengthAdjust="spacingAndGlyphs">authentication, session event with process notepad.exe, by mxqtttsf89 on …</text>
<text x="179.5" y="615.75" font-size="11.6" textLength="150.6" lengthAdjust="spacingAndGlyphs">Mar 7, 2024 @ 20:44:06.632</text>
<text x="359.6" y="615.75" font-size="11.6" fill="#0a63bd" textLength="47.2" lengthAdjust="spacingAndGlyphs">Match All</text>
<text x="473.8" y="615.75" font-size="11.6" textLength="34.9" lengthAdjust="spacingAndGlyphs">Critical</text>
<text x="833.3" y="615.75" font-size="11.6" text-anchor="end" textLength="50" lengthAdjust="spacingAndGlyphs">92.13297</text>
<text x="854.6" y="617.35" font-size="11.6" fill="#000" textLength="62.6" lengthAdjust="spacingAndGlyphs">high_impact</text>
<text x="1000.5" y="615.75" font-size="11.4" textLength="389.2" lengthAdjust="spacingAndGlyphs">authentication, session event with process notepad.exe, by mxqtttsf89 on …</text>
<text x="179.5" y="640.88" font-size="11.6" textLength="150.6" lengthAdjust="spacingAndGlyphs">Mar 7, 2024 @ 19:59:00.405</text>
<text x="359.6" y="640.88" font-size="11.6" fill="#0a63bd" textLength="47.2" lengthAdjust="spacingAndGlyphs">Match All</text>
<text x="473.8" y="640.88" font-size="11.6" textLength="34.9" lengthAdjust="spacingAndGlyphs">Critical</text>
<text x="833.3" y="640.88" font-size="11.6" text-anchor="end" textLength="50" lengthAdjust="spacingAndGlyphs">92.13297</text>
<text x="854.6" y="642.48" font-size="11.6" fill="#000" textLength="62.6" lengthAdjust="spacingAndGlyphs">high_impact</text>
<text x="1000.5" y="640.88" font-size="11.4" textLength="392.3" lengthAdjust="spacingAndGlyphs">registry event with process mimikatz.exe, by tw6k2eht0t on Host-7xrig6dz…</text>
<text x="179.5" y="666.01" font-size="11.6" textLength="150.6" lengthAdjust="spacingAndGlyphs">Mar 7, 2024 @ 19:59:00.388</text>
<text x="359.6" y="666.01" font-size="11.6" fill="#0a63bd" textLength="47.2" lengthAdjust="spacingAndGlyphs">Match All</text>
<text x="473.8" y="666.01" font-size="11.6" textLength="34.9" lengthAdjust="spacingAndGlyphs">Critical</text>
<text x="833.3" y="666.01" font-size="11.6" text-anchor="end" textLength="50" lengthAdjust="spacingAndGlyphs">92.13297</text>
<text x="854.6" y="667.61" font-size="11.6" fill="#000" textLength="62.6" lengthAdjust="spacingAndGlyphs">high_impact</text>
<text x="1000.5" y="666.01" font-size="11.4" textLength="392.3" lengthAdjust="spacingAndGlyphs">registry event with process mimikatz.exe, by tw6k2eht0t on Host-7xrig6dz…</text>
<text x="179.5" y="691.14" font-size="11.6" textLength="150.6" lengthAdjust="spacingAndGlyphs">Mar 7, 2024 @ 14:23:03.585</text>
<text x="359.6" y="691.14" font-size="11.6" fill="#0a63bd" textLength="47.2" lengthAdjust="spacingAndGlyphs">Match All</text>
<text x="473.8" y="691.14" font-size="11.6" textLength="34.9" lengthAdjust="spacingAndGlyphs">Critical</text>
<text x="833.3" y="691.14" font-size="11.6" text-anchor="end" textLength="50" lengthAdjust="spacingAndGlyphs">92.09742</text>
<text x="854.6" y="692.74" font-size="11.6" fill="#000" textLength="62.6" lengthAdjust="spacingAndGlyphs">high_impact</text>
<text x="1000.5" y="691.14" font-size="11.4" textLength="393.0" lengthAdjust="spacingAndGlyphs">behavior event with process notepad.exe, file fake_behavior.exe, source 10…</text>
<text x="179.5" y="716.27" font-size="11.6" textLength="150.6" lengthAdjust="spacingAndGlyphs">Mar 7, 2024 @ 14:23:03.577</text>
<text x="359.6" y="716.27" font-size="11.6" fill="#0a63bd" textLength="47.2" lengthAdjust="spacingAndGlyphs">Match All</text>
<text x="473.8" y="716.27" font-size="11.6" textLength="34.9" lengthAdjust="spacingAndGlyphs">Critical</text>
<text x="833.3" y="716.27" font-size="11.6" text-anchor="end" textLength="50" lengthAdjust="spacingAndGlyphs">92.09742</text>
<text x="854.6" y="717.87" font-size="11.6" fill="#000" textLength="62.6" lengthAdjust="spacingAndGlyphs">high_impact</text>
<text x="1000.5" y="716.27" font-size="11.4" textLength="393.0" lengthAdjust="spacingAndGlyphs">behavior event with process notepad.exe, file fake_behavior.exe, source 10…</text>
</svg>
<div style="position:absolute;left:655px;top:4px;width:330px;height:39px;box-sizing:border-box;border:3px solid #fb3f82;box-shadow:1px 2px 2px rgba(0,0,0,0.6), inset 0 2.5px 1.5px rgba(0,0,0,0.5)"></div>
<div style="position:absolute;left:835px;top:442px;width:132.2px;height:287.6px;box-sizing:border-box;border:3px solid #fb3f82;box-shadow:1px 2px 2px rgba(0,0,0,0.55), inset 0 2.5px 1.5px rgba(0,0,0,0.5)"></div>
<div style="position:absolute;left:14px;top:728.6px;width:716px;height:1.2px;background:rgba(120,125,140,0.35)"></div><div style="position:absolute;left:0;top:0;width:1416px;height:2px;background:#000"></div><div style="position:absolute;left:0;top:0;width:2px;height:732px;background:#000"></div><div style="position:absolute;left:1414px;top:0;width:2px;height:732px;background:#000"></div><div style="position:absolute;left:0;top:730px;width:1416px;height:2px;background:#000"></div>
</body></html>
